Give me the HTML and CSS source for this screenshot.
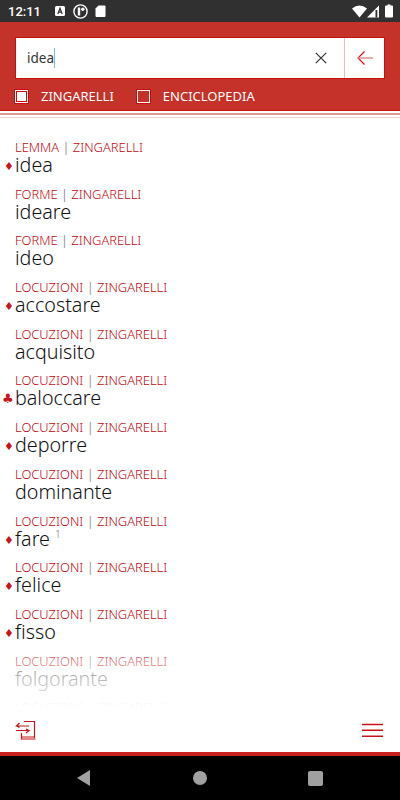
FILE: index.html
```html
<!DOCTYPE html>
<html>
<head>
    <title>Zingarelli</title>
    <link rel="stylesheet" href="styles.css">
</head>
<body>
    <div class="status-bar">
        <span class="clock">12:11</span>
        <svg width="12" height="14" viewBox="0 0 12 14"><rect x="1" y="2" width="10" height="10" rx="1.500" fill="#fff"/><path d="M3.800 10 6 4.200 8.200 10M4.600 8.200h2.800" fill="none" stroke="#303030" stroke-width="1.200"/></svg>
        <svg width="15" height="15" viewBox="0 0 15 15"><circle cx="7.500" cy="7.500" r="6.600" fill="#303030" stroke="#fff" stroke-width="1.400"/><path d="M4.800 3.500h2.400v8H4.800z" fill="#fff"/><circle cx="9.800" cy="5.200" r="1.700" fill="#fff"/></svg>
        <svg width="11" height="14" viewBox="0 0 11 14"><path d="M3.500 1.500h6a1 1 0 0 1 1 1v9.500a1 1 0 0 1-1 1H1.500a1 1 0 0 1-1-1V4.500z" fill="#fff"/></svg>
        <span class="status-right">
            <svg class="wifi" width="15" height="13" viewBox="0 0 15 13"><path d="M0 3.500Q7.500-2.500 15 3.500L7.500 12.500z" fill="#fff"/></svg>
            <svg class="signal" width="12" height="13" viewBox="0 0 12 13"><path d="M12 0.500v12H0z" fill="#fff"/><path d="M8.500 5h1.800v7.500H8.500z" fill="#303030"/></svg>
            <svg width="8" height="14" viewBox="0 0 8 14"><path d="M2.500 0.500h3v1h1.500a1 1 0 0 1 1 1v10a1 1 0 0 1-1 1H1a1 1 0 0 1-1-1v-10a1 1 0 0 1 1-1h1.500z" fill="#fff"/></svg>
        </span>
    </div>

    <header class="search-head">
        <div class="search-box">
            <div class="search-input">
                <span class="search-text">idea</span><span class="caret"></span>
            </div>
            <svg class="clear-icon" width="12" height="12" viewBox="0 0 12 12"><path d="M0.800 0.800 11.200 11.200M11.200 0.800 0.800 11.200" stroke="#333" stroke-width="1.200"/></svg>
            <div class="back-btn">
                <svg width="16" height="14" viewBox="0 0 16 14"><path d="M7.500 0.500 1 7l6.500 6.500" fill="none" stroke="#c8141a" stroke-width="1.200"/><path d="M1 7h15" stroke="#e08a8a" stroke-width="1.400"/></svg>
            </div>
        </div>
        <div class="filters">
            <div class="filter"><span class="check check-on"></span>ZINGARELLI</div>
            <div class="filter"><span class="check"></span>ENCICLOPEDIA</div>
        </div>
    </header>
    <div class="head-rules"></div>

    <main class="results">
        <div class="entry">
            <div class="entry-tag">LEMMA <i>|</i> ZINGARELLI</div>
            <div class="entry-word"><span class="mark">♦</span>idea</div>
        </div>
        <div class="entry">
            <div class="entry-tag">FORME <i>|</i> ZINGARELLI</div>
            <div class="entry-word">ideare</div>
        </div>
        <div class="entry">
            <div class="entry-tag">FORME <i>|</i> ZINGARELLI</div>
            <div class="entry-word">ideo</div>
        </div>
        <div class="entry">
            <div class="entry-tag">LOCUZIONI <i>|</i> ZINGARELLI</div>
            <div class="entry-word"><span class="mark">♦</span>accostare</div>
        </div>
        <div class="entry">
            <div class="entry-tag">LOCUZIONI <i>|</i> ZINGARELLI</div>
            <div class="entry-word">acquisito</div>
        </div>
        <div class="entry">
            <div class="entry-tag">LOCUZIONI <i>|</i> ZINGARELLI</div>
            <div class="entry-word"><span class="mark mark-club">♣</span>baloccare</div>
        </div>
        <div class="entry">
            <div class="entry-tag">LOCUZIONI <i>|</i> ZINGARELLI</div>
            <div class="entry-word"><span class="mark">♦</span>deporre</div>
        </div>
        <div class="entry">
            <div class="entry-tag">LOCUZIONI <i>|</i> ZINGARELLI</div>
            <div class="entry-word">dominante</div>
        </div>
        <div class="entry">
            <div class="entry-tag">LOCUZIONI <i>|</i> ZINGARELLI</div>
            <div class="entry-word"><span class="mark">♦</span>fare <sup class="homograph">1</sup></div>
        </div>
        <div class="entry">
            <div class="entry-tag">LOCUZIONI <i>|</i> ZINGARELLI</div>
            <div class="entry-word"><span class="mark">♦</span>felice</div>
        </div>
        <div class="entry">
            <div class="entry-tag">LOCUZIONI <i>|</i> ZINGARELLI</div>
            <div class="entry-word"><span class="mark">♦</span>fisso</div>
        </div>
        <div class="entry">
            <div class="entry-tag">LOCUZIONI <i>|</i> ZINGARELLI</div>
            <div class="entry-word">folgorante</div>
        </div>
        <div class="entry">
            <div class="entry-tag">LOCUZIONI <i>|</i> ZINGARELLI</div>
        </div>
        <div class="results-fade"></div>
    </main>

    <footer class="toolbar">
        <svg width="21" height="20" viewBox="0 0 21 20" fill="none" stroke="#c8141a" stroke-width="1.200"><path d="M9 1.500h10.500V18M6.500 13v6h14M6.500 17h13M14 6H1.500L4.500 3M1.500 6l3 1.500M1 10.500h13L11 13M14 10.500l-3-1.500"/></svg>
        <svg width="21" height="15" viewBox="0 0 21 15" stroke="#c8141a" stroke-width="1.400"><path d="M0 1.500h21M0 7.300h21M0 13.200h21"/></svg>
    </footer>

    <nav class="nav-bar">
        <span class="nav-back"></span>
        <span class="nav-home"></span>
        <span class="nav-recent"></span>
    </nav>
</body>
</html>
```

FILE: styles.css
```css
* {
    box-sizing: border-box;
}

body {
    margin: 0;
    width: 400px;
    height: 800px;
    display: flex;
    flex-direction: column;
    overflow: hidden;
    background-color: white;
    font-family: "Noto Sans", sans-serif;
}

/* Status bar */
.status-bar {
    height: 22px;
    flex-shrink: 0;
    display: flex;
    align-items: center;
    gap: 7px;
    padding: 0 7px 0 8px;
    background-color: #303030;
}

.clock {
    font-family: Roboto, sans-serif;
    font-size: 13px;
    font-weight: 500;
    color: white;
    margin-right: 6px;
}

.status-right {
    margin-left: auto;
    display: flex;
    align-items: center;
    gap: 6px;
}

.wifi {
    margin-right: -6px;
}

/* Search header */
.search-head {
    height: 89px;
    flex-shrink: 0;
    padding: 15px 15px 0;
    background-color: #c53229;
    border-bottom: 1px solid #c80e0e;
}

.search-box {
    height: 42px;
    display: flex;
    align-items: center;
    background-color: white;
    border: 1px solid #c80e0e;
}

.search-input {
    flex: 1;
    display: flex;
    align-items: center;
    padding-left: 11px;
}

.search-text {
    font-size: 13.500px;
    color: #333;
}

.caret {
    width: 1px;
    height: 20px;
    background-color: #7fc4c4;
}

.clear-icon {
    margin-right: 17px;
}

.back-btn {
    width: 40px;
    height: 40px;
    display: flex;
    align-items: center;
    justify-content: center;
    border-left: 1px solid #e8bcbc;
}

.filters {
    display: flex;
    gap: 23px;
    margin-top: 8px;
}

.filter {
    display: flex;
    align-items: center;
    gap: 13px;
    font-size: 13px;
    line-height: 18px;
    color: white;
}

.check {
    width: 13px;
    height: 13px;
    border: 1px solid white;
    outline: 1px solid #c80e0e;
}

.check-on {
    background-color: white;
    box-shadow: inset 0 0 0 1px #c80e0e;
}

.head-rules {
    height: 5px;
    flex-shrink: 0;
    margin-top: 2px;
    border-top: 2px solid #e09a96;
    border-bottom: 1px solid #eed0ce;
}

/* Results */
.results {
    flex: 1;
    position: relative;
    overflow: hidden;
    padding: 21px 15px 0;
}

.entry {
    height: 46.700px;
}

.entry-tag {
    font-size: 12.900px;
    font-weight: 300;
    line-height: 16px;
    color: #c00a10;
}

.entry-tag i {
    font-style: normal;
    color: #666;
}

.entry-word {
    position: relative;
    font-size: 19.700px;
    font-weight: 300;
    line-height: 22px;
    margin-top: -1px;
    color: #111;
}

.mark {
    position: absolute;
    left: -11px;
    top: 2px;
    font-family: "DejaVu Sans", sans-serif;
    font-size: 11px;
    font-weight: 400;
    color: #c8141a;
}

.mark-club {
    left: -13px;
    font-size: 13px;
    top: 1px;
}

.homograph {
    font-size: 10px;
    color: #777;
    vertical-align: 8px;
    line-height: 0;
}

.results-fade {
    position: absolute;
    left: 0;
    right: 0;
    bottom: 0;
    height: 68px;
    background: linear-gradient(rgba(255, 255, 255, 0), rgba(255, 255, 255, 0.65) 50%, white 100%);
}

/* Bottom toolbar */
.toolbar {
    height: 48px;
    flex-shrink: 0;
    display: flex;
    align-items: center;
    justify-content: space-between;
    padding: 0 17px 0 15px;
    border-bottom: 4px solid #c8201c;
}

.nav-bar {
    height: 44px;
    flex-shrink: 0;
    display: flex;
    align-items: center;
    justify-content: space-between;
    padding: 0 77px;
    background-color: black;
}

.nav-back {
    width: 0;
    height: 0;
    border-top: 8px solid transparent;
    border-bottom: 8px solid transparent;
    border-right: 13px solid #a0a0a0;
}

.nav-home {
    width: 14px;
    height: 14px;
    margin-left: 2px;
    border-radius: 50%;
    background-color: #a0a0a0;
}

.nav-recent {
    width: 15px;
    height: 15px;
    border-radius: 2px;
    background-color: #a0a0a0;
}
```
